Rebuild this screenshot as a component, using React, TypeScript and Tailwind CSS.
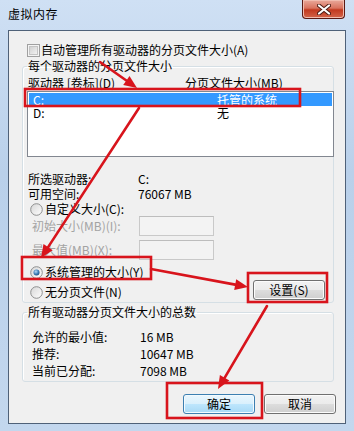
import React from "react";

const Radio: React.FC<{ checked?: boolean }> = ({ checked = false }) => (
  <svg width="13" height="13" viewBox="0 0 13 13" className="shrink-0">
    <defs>
      <linearGradient id={checked ? "rg-on" : "rg-off"} x1="0" y1="0" x2="1" y2="1">
        <stop offset="0" stopColor="#d6d6d6" />
        <stop offset="1" stopColor="#ffffff" />
      </linearGradient>
      <radialGradient id="dot" cx="0.4" cy="0.35" r="0.7">
        <stop offset="0" stopColor="#b7dcf7" />
        <stop offset="0.6" stopColor="#3d7fb8" />
        <stop offset="1" stopColor="#1d4f7e" />
      </radialGradient>
    </defs>
    <circle cx="6.5" cy="6.5" r="5.8" fill={`url(#${checked ? "rg-on" : "rg-off"})`} stroke="#8e8f8f" strokeWidth="1" />
    {checked && <circle cx="6.5" cy="6.5" r="3" fill="url(#dot)" />}
  </svg>
);

const Checkbox: React.FC = () => (
  <svg width="13" height="13" viewBox="0 0 13 13" className="shrink-0">
    <defs>
      <linearGradient id="cb" x1="0" y1="0" x2="1" y2="1">
        <stop offset="0" stopColor="#cfcfcf" />
        <stop offset="1" stopColor="#f4f4f4" />
      </linearGradient>
    </defs>
    <rect x="0.5" y="0.5" width="12" height="12" fill="#f4f4f4" stroke="#a0a0a0" />
    <rect x="2.5" y="2.5" width="8" height="8" fill="url(#cb)" stroke="#c4c4c4" />
  </svg>
);

const WinButton: React.FC<{ label: string; primary?: boolean }> = ({ label, primary }) => (
  <div
    className={
      primary
        ? "w-[72px] h-[20px] rounded-[3px] border border-[#3c7fb1] bg-[linear-gradient(#eaf6fd,#d9f0fc_50%,#bee6fd_50%,#a7d9f5)] shadow-[inset_0_0_0_1px_#f2fafe] flex items-center justify-center"
        : "w-[72px] h-[20px] rounded-[3px] border border-[#707070] bg-[linear-gradient(#f2f2f2,#ebebeb_50%,#dddddd_50%,#cfcfcf)] shadow-[inset_0_0_0_1px_#fcfcfc] flex items-center justify-center"
    }
  >
    {label}
  </div>
);

const DisabledInput: React.FC = () => (
  <div className="w-[75px] h-[20px] border border-[#c9c9c9] border-t-[#bdbdbd] bg-[#f3f3f3]" />
);

const RED = "#d8141c";

const Arrow: React.FC<{ x1: number; y1: number; x2: number; y2: number }> = ({ x1, y1, x2, y2 }) => {
  const a = Math.atan2(y2 - y1, x2 - x1);
  const len = 13;
  const w = 5.5;
  const bx = x2 - len * Math.cos(a);
  const by = y2 - len * Math.sin(a);
  const px = -Math.sin(a) * w;
  const py = Math.cos(a) * w;
  return (
    <g>
      <line x1={x1} y1={y1} x2={bx} y2={by} stroke={RED} strokeWidth="2.6" strokeLinecap="round" />
      <polygon points={`${x2},${y2} ${bx + px},${by + py} ${bx - px},${by - py}`} fill={RED} />
    </g>
  );
};

export default function App() {
  return (
    <div className="relative w-[354px] h-[431px] overflow-hidden bg-[linear-gradient(180deg,#cfe0f4,#b9d0ea_40%,#c3d7ee)] font-['Noto_Sans_CJK_SC',sans-serif] text-[12px] leading-[14px] text-black">
      {/* title bar */}
      <div className="h-[30px] flex items-start justify-between pl-[8px] pr-[9px]">
        <div className="mt-[7px] tracking-[0.5px]">虚拟内存</div>
        <div className="w-[43px] h-[19px] rounded-b-[4px] border border-t-0 border-[#5a1a14] bg-[linear-gradient(#e9a99b,#d9735f_45%,#c2391f_55%,#d3654a)] shadow-[inset_0_0_0_1px_#f1bdb0] flex items-center justify-center">
          <svg width="14" height="11" viewBox="0 0 14 11">
            <path d="M2 1.5 L12 9.5 M12 1.5 L2 9.5" stroke="#4b1a12" strokeWidth="4" strokeLinecap="round" />
            <path d="M2 1.5 L12 9.5 M12 1.5 L2 9.5" stroke="#ffffff" strokeWidth="2.2" strokeLinecap="round" />
          </svg>
        </div>
      </div>

      {/* client area */}
      <div className="mx-[8px] w-[338px] h-[394px] border border-[#4f6178] bg-[#f0f0f0] pl-[13px] pr-[11px] pt-[12px] flex flex-col">
        <div className="h-[14px] flex items-center gap-[1px] ml-[5px]">
          <Checkbox />
          <span>自动管理所有驱动器的分页文件大小(A)</span>
        </div>

        <fieldset className="mt-[2px] border border-[#d5dfe5] rounded-[3px] pl-[5px] pr-[8px] pb-[3px] shadow-[inset_1px_1px_0_#ffffff]">
          <legend className="px-[1px] -ml-[1px] leading-[14px]">每个驱动器的分页文件大小</legend>
          <div className="mt-[3px] h-[14px] grid grid-cols-[157px_1fr]">
            <span>驱动器 [卷标](D)</span>
            <span>分页文件大小(MB)</span>
          </div>

          <div className="mt-[1px] -ml-[1px] -mr-[9px] h-[66px] border border-[#828790] bg-white px-[1px] pt-[1px]">
            <div className="h-[13px] leading-[13px] grid grid-cols-[184px_1fr] bg-[#3399ff] text-white pl-[4px]">
              <span>C:</span>
              <span>托管的系统</span>
            </div>
            <div className="h-[13px] leading-[13px] grid grid-cols-[184px_1fr] pl-[4px]">
              <span>D:</span>
              <span>无</span>
            </div>
          </div>

          <div className="mt-[14px] grid grid-cols-[110px_1fr] leading-[15px]">
            <span>所选驱动器:</span>
            <span>C:</span>
            <span>可用空间:</span>
            <span>76067 MB</span>
          </div>

          <div className="mt-[1px] h-[14px] flex items-center gap-[2px] ml-[2px]">
            <Radio />
            <span>自定义大小(C):</span>
          </div>
          <div className="h-[20px] flex items-center text-[#a3a3a3]">
            <span className="w-[111px] pl-[4px]">初始大小(MB)(I):</span>
            <DisabledInput />
          </div>
          <div className="mt-[4px] h-[20px] flex items-center text-[#a3a3a3]">
            <span className="w-[111px] pl-[4px]">最大值(MB)(X):</span>
            <DisabledInput />
          </div>

          <div className="mt-[5px] flex items-end justify-between">
            <div className="flex flex-col gap-[6px]">
              <div className="h-[14px] flex items-center gap-[2px] ml-[2px]">
                <Radio checked />
                <span>系统管理的大小(Y)</span>
              </div>
              <div className="h-[14px] flex items-center gap-[2px] ml-[2px]">
                <Radio />
                <span>无分页文件(N)</span>
              </div>
            </div>
            <div className="-mb-[1px]">
              <WinButton label="设置(S)" />
            </div>
          </div>
        </fieldset>

        <fieldset className="mt-[2px] border border-[#d5dfe5] rounded-[3px] pl-[5px] pr-[8px] pb-[2px] shadow-[inset_1px_1px_0_#ffffff]">
          <legend className="px-[1px] -ml-[1px] leading-[14px]">所有驱动器分页文件大小的总数</legend>
          <div className="mt-[9px] pl-[4px] grid grid-cols-[108px_1fr] leading-[17px]">
            <span>允许的最小值:</span>
            <span>16 MB</span>
            <span>推荐:</span>
            <span>10647 MB</span>
            <span>当前已分配:</span>
            <span>7098 MB</span>
          </div>
        </fieldset>

        <div className="mt-[12px] -mr-[2px] flex justify-end gap-[9px]">
          <WinButton label="确定" primary />
          <WinButton label="取消" />
        </div>
      </div>

      {/* red annotations drawn over the dialog */}
      <svg className="absolute inset-0 pointer-events-none" width="354" height="431" viewBox="0 0 354 431">
        <g fill="none" stroke={RED} strokeWidth="2.6">
          <rect x="25" y="89" width="275" height="17" />
          <rect x="22" y="257" width="129" height="22" />
          <rect x="248" y="273" width="79" height="29" />
          <rect x="167" y="383" width="95" height="35" />
        </g>
        <Arrow x1={100} y1={62} x2={137} y2={88} />
        <Arrow x1={139} y1={108} x2={41} y2={258} />
        <Arrow x1={151} y1={269} x2={248} y2={287} />
        <Arrow x1={267} y1={306} x2={218} y2={389} />
      </svg>
    </div>
  );
}
